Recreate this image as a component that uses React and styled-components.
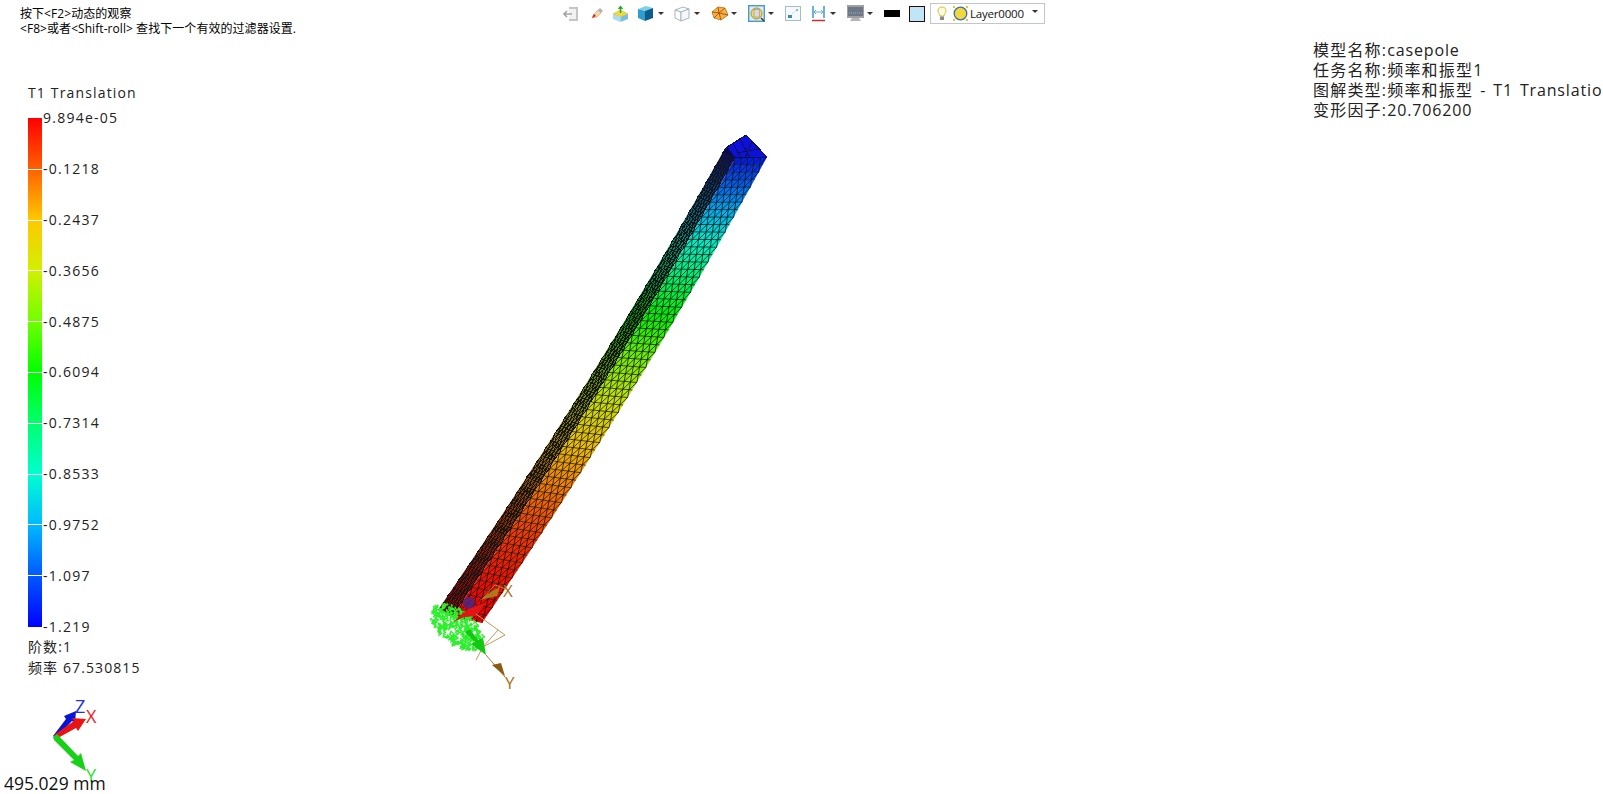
import React, { useMemo } from "react";
import styled, { createGlobalStyle } from "styled-components";

const Global = createGlobalStyle`
  html, body { margin: 0; padding: 0; background: #fff; }
  #root { width: 1603px; height: 794px; }
`;

const FONT = `"Open Sans", "Noto Sans CJK SC", sans-serif`;

const Page = styled.div`
  position: relative;
  width: 1603px;
  height: 794px;
  overflow: hidden;
  background: #fff;
  font-family: ${FONT};
  color: #111;
`;
const Canvas = styled.svg`
  position: absolute;
  left: 0;
  top: 0;
`;
const Overlay = styled.div`
  position: relative;
  display: flex;
  flex-direction: column;
  height: 100%;
`;
const Header = styled.header`
  display: grid;
  grid-template-columns: 563px auto 1fr;
  height: 40px;
`;
const Hint = styled.div`
  padding: 6px 0 0 20px;
  font-size: 12px;
  line-height: 15px;
  letter-spacing: 0.06px;
  white-space: pre;
  color: #000;
`;
const Toolbar = styled.div`
  display: flex;
  align-items: center;
  height: 21px;
  padding-top: 3px;
`;
const Glyph = styled.svg`
  display: block;
  flex: none;
  margin-left: ${(p) => p.$ml || 0}px;
`;
const Caret = styled.span`
  flex: none;
  width: 0;
  height: 0;
  margin-left: ${(p) => p.$ml || 3}px;
  border-left: 3px solid transparent;
  border-right: 3px solid transparent;
  border-top: 3px solid #333;
`;
const Combo = styled.div`
  display: flex;
  align-items: center;
  box-sizing: border-box;
  width: 115px;
  height: 21px;
  margin-left: 5px;
  padding-left: 6px;
  border: 1px solid #c2c6ca;
  font-size: 11.5px;
  letter-spacing: -0.2px;
  color: #111;
`;
const ComboText = styled.span`
  margin-left: 2px;
  flex: 1;
`;
const ComboCaret = styled(Caret)`
  margin: 0 6px 4px 0;
`;
const Body = styled.main`
  flex: 1;
  display: flex;
  justify-content: space-between;
`;
const LeftColumn = styled.section`
  display: flex;
  flex-direction: column;
`;
const Legend = styled.div`
  padding: 44px 0 0 28px;
`;
const LegendTitle = styled.div`
  font-size: 14px;
  line-height: 18px;
  letter-spacing: 1.15px;
  color: #222;
`;
const Scale = styled.div`
  display: flex;
  margin-top: 16px;
  height: 509px;
`;
const ColorBar = styled.div`
  width: 14px;
  height: 100%;
  display: flex;
  flex-direction: column;
  justify-content: space-between;
  background: linear-gradient(
    to bottom,
    #ff0000 0%,
    #ff6000 10%,
    #ffc800 20%,
    #d0f000 30%,
    #70ff00 40%,
    #00ff00 50%,
    #00ff70 60%,
    #00ffd0 70%,
    #00b8ff 80%,
    #0058ff 90%,
    #0000ff 100%
  );
`;
const Tick = styled.i`
  display: block;
  height: 1px;
  background: ${(p) => (p.$hidden ? "transparent" : "#fff")};
`;
const ScaleLabels = styled.div`
  display: flex;
  flex-direction: column;
  justify-content: space-between;
  height: 525px;
  margin: -8px 0 0 1px;
`;
const ScaleLabel = styled.span`
  font-size: 14px;
  line-height: 16px;
  letter-spacing: 1.25px;
  color: #222;
  white-space: nowrap;
`;
const Meta = styled.div`
  margin-top: 9px;
  font-size: 14px;
  line-height: 21px;
  letter-spacing: 1.1px;
  color: #222;
`;
const Triad = styled.svg`
  display: block;
  overflow: visible;
  margin-top: 14px;
`;
const Distance = styled.div`
  padding-left: 4px;
  font-size: 17.5px;
  line-height: 22px;
  color: #111;
  white-space: nowrap;
`;
const Info = styled.aside`
  box-sizing: border-box;
  width: 290px;
  overflow: hidden;
  font-size: 16px;
  line-height: 20px;
  letter-spacing: 1.2px;
  color: #222;
  white-space: nowrap;
`;
const Latin = styled.span`
  letter-spacing: 0.85px;
  word-spacing: 2px;
`;

/* ---------- colour map ---------- */
const STOPS = [
  [255, 0, 0], [255, 96, 0], [255, 200, 0], [208, 240, 0], [112, 255, 0], [0, 255, 0],
  [0, 255, 112], [0, 255, 208], [0, 184, 255], [0, 88, 255], [0, 0, 255],
];
function colorAt(f, k = 1) {
  const v = Math.max(0, Math.min(0.9999, f)) * 10;
  const i = Math.floor(v);
  const u = v - i;
  const c = STOPS[i].map((a, n) => Math.round((a + (STOPS[i + 1][n] - a) * u) * k));
  return `rgb(${c[0]},${c[1]},${c[2]})`;
}

/* ---------- beam mesh ---------- */
const bez = (a, c, b, t) => [
  (1 - t) * (1 - t) * a[0] + 2 * t * (1 - t) * c[0] + t * t * b[0],
  (1 - t) * (1 - t) * a[1] + 2 * t * (1 - t) * c[1] + t * t * b[1],
];
const LEFT = [[723, 152], [595, 381], [438, 610]];
const RIDGE = [[735, 158], [608, 387], [452, 617]];
const RIGHT = [[767, 157], [640, 390], [482, 623]];
const lerp = (p, q, u) => [p[0] + (q[0] - p[0]) * u, p[1] + (q[1] - p[1]) * u];
const fmt = (p) => `${p[0].toFixed(1)} ${p[1].toFixed(1)}`;

function buildFace(A, B, rows, cols, shade) {
  const strips = [];
  let lines = "";
  const P = (i, c) => lerp(bez(A[0], A[1], A[2], i / rows), bez(B[0], B[1], B[2], i / rows), c);
  for (let i = 0; i < rows; i++) {
    const y = P(i + 0.5, 0.5)[1];
    const s = Math.max(0, (620 - y) / 470);
    const f = Math.pow(s, 1.6);
    strips.push({
      pts: `${fmt(P(i, 0))} ${fmt(P(i, 1))} ${fmt(P(i + 1, 1))} ${fmt(P(i + 1, 0))}`,
      fill: colorAt(f, shade),
    });
    lines += `M${fmt(P(i, 0))}L${fmt(P(i, 1))}`;
    const odd = i % 2 === 1;
    for (let j = 0; j <= cols; j++) {
      const top = (j + (odd ? 0.5 : 0)) / cols;
      const l = (j + (odd ? 0 : -0.5)) / cols;
      const r = (j + (odd ? 1 : 0.5)) / cols;
      if (top <= 1) {
        if (l >= 0) lines += `M${fmt(P(i, top))}L${fmt(P(i + 1, l))}`;
        if (r <= 1) lines += `M${fmt(P(i, top))}L${fmt(P(i + 1, r))}`;
      }
    }
  }
  return { strips, lines };
}

function rng(seed) {
  let a = seed;
  return () => {
    a = (a + 0x6d2b79f5) | 0;
    let t = Math.imul(a ^ (a >>> 15), 1 | a);
    t = (t + Math.imul(t ^ (t >>> 7), 61 | t)) ^ t;
    return ((t ^ (t >>> 14)) >>> 0) / 4294967296;
  };
}

function Constraints() {
  const d = useMemo(() => {
    const r = rng(4242);
    let out = "";
    for (let n = 0; n < 340; n++) {
      const a = r() * Math.PI * 2;
      const m = Math.sqrt(r());
      const u = Math.cos(a) * m * 28;
      const v = Math.sin(a) * m * 23;
      const x = 456 + u * 0.92 + v * 0.2;
      const y = 626 + u * 0.3 + v * 0.95;
      const dx = 1 + r() * 2.5;
      const dy = 1 + r() * 2.5;
      out += `M${x.toFixed(1)} ${y.toFixed(1)}l${dx.toFixed(1)} ${dy.toFixed(1)}m-${dx.toFixed(1)} 1l${dy.toFixed(1)} -2`;
    }
    return out;
  }, []);
  return <path d={d} stroke="#2cf02c" strokeWidth="1.3" fill="none" />;
}

function Beam() {
  const { dark, bright } = useMemo(
    () => ({
      dark: buildFace(LEFT, RIDGE, 62, 5, 0.55),
      bright: buildFace(RIDGE, RIGHT, 62, 5, 0.94),
    }),
    []
  );
  return (
    <g>
      {dark.strips.map((s, i) => (
        <polygon key={`d${i}`} points={s.pts} fill={s.fill} />
      ))}
      {bright.strips.map((s, i) => (
        <polygon key={`b${i}`} points={s.pts} fill={s.fill} />
      ))}
      <path d={dark.lines} stroke="#161616" strokeWidth="1" fill="none" shapeRendering="crispEdges" />
      <path d={bright.lines} stroke="#161616" strokeWidth="0.8" fill="none" />
      <polygon points="746,135 767,157 735,158 727,147" fill="#0c12dc" />
      <polygon points="727,147 735,158 723,152" fill="#0a0a50" />
      <path
        d="M727 147L746 135L767 157L735 158L727 147L723 152M740 139L750 158M733 143L741 158M752 141L745 158M759 149L737 153"
        stroke="#10104a"
        strokeWidth="1"
        fill="none"
        shapeRendering="crispEdges"
      />
    </g>
  );
}

function ModelMarks() {
  return (
    <g>
      <Constraints />
      <circle cx="469" cy="603" r="6" fill="#402a90" opacity="0.75" />
      <path d="M483 598L495 585L506 589" stroke="#b08840" strokeWidth="1" fill="none" />
      <path d="M480 600L492 591L500 587L497 596Z" fill="#b07818" />
      <path d="M453 622L468 609L485 603L477 616L464 617Z" fill="#e21414" />
      <path d="M476 614L505 635L483 647L476 660" stroke="#c09a58" strokeWidth="1" fill="none" />
      <path d="M483 647L498 630" stroke="#c09a58" strokeWidth="1" fill="none" />
      <path d="M465 632L470 629L478 640L483 638L486 655L471 644L475 642Z" fill="#12c812" />
      <path d="M486 655L505 677" stroke="#a87830" strokeWidth="1" />
      <path d="M492 665L501 663L505 676Z" fill="#8a5a12" />
      <text x="503" y="597" fontSize="17" fill="#a87018" fontFamily="Open Sans, sans-serif">X</text>
      <text x="505" y="689" fontSize="17" fill="#a87018" fontFamily="Open Sans, sans-serif">Y</text>
    </g>
  );
}

function TriadIcon() {
  return (
    <Triad width="110" height="80" viewBox="0 692 110 80">
      <path d="M53 736L66 719L64 716L76 711L75 723L72 721L56 738Z" fill="#0a14d8" />
      <path d="M54 735L74 721L72 718L86 719L78 731L76 728L56 739Z" fill="#e81414" />
      <path d="M53 737L57 734L78 756L81 753L86 771L70 762L74 760L54 740Z" fill="#18d018" />
      <text x="75" y="713" fontSize="18" fill="#2030e8" fontFamily="Open Sans, sans-serif">Z</text>
      <text x="86" y="723" fontSize="18" fill="#f01818" fontFamily="Open Sans, sans-serif">X</text>
      <text x="86" y="782" fontSize="18" fill="#30e030" fontFamily="Open Sans, sans-serif">Y</text>
    </Triad>
  );
}

/* ---------- toolbar icons ---------- */
const ExitIcon = () => (
  <Glyph width="15" height="14" viewBox="0 0 15 14">
    <path d="M6 1H14V13H6" stroke="#c6c6c6" strokeWidth="2" fill="#f2f2f2" />
    <path d="M9 7H1M4 4L1 7L4 10" stroke="#a4a4a4" strokeWidth="1.6" fill="none" />
  </Glyph>
);
const EraserIcon = () => (
  <Glyph $ml={13} width="12" height="11" viewBox="0 0 12 11">
    <path d="M1 10L3 6L7 2L10 5L6 9Z" fill="#f4d8a8" stroke="#c8a070" strokeWidth="0.6" />
    <path d="M1 10L3 6L5 8Z" fill="#d81818" />
    <path d="M7 2L9 0L12 3L10 5Z" fill="#b0b0b8" />
  </Glyph>
);
const ImportBoxIcon = () => (
  <Glyph $ml={9} width="17" height="16" viewBox="0 0 17 16">
    <path d="M1 8L8.5 4L16 8L8.5 11Z" fill="#f2d838" stroke="#c8a820" strokeWidth="0.5" />
    <path d="M1 8L8.5 11V16L1 13Z" fill="#a8dcf0" />
    <path d="M16 8L8.5 11V16L16 13Z" fill="#78bede" />
    <path d="M8.5 7V1M6.5 3L8.5 0.5L10.5 3" stroke="#18a838" strokeWidth="1.3" fill="none" />
  </Glyph>
);
const SolidCubeIcon = () => (
  <Glyph $ml={8} width="17" height="17" viewBox="0 0 17 17">
    <path d="M1 4L9 1L16 3L8 6Z" fill="#7cd0ec" />
    <path d="M1 4L8 6V16L1 13Z" fill="#2e9ccc" />
    <path d="M16 3L8 6V16L16 13Z" fill="#0c5c8c" />
  </Glyph>
);
const WireCubeIcon = () => (
  <Glyph $ml={10} width="16" height="16" viewBox="0 0 16 16">
    <path d="M1 4L9 1L15 3L7 6Z" fill="#fff" stroke="#a6b6c2" />
    <path d="M1 4L7 6V15L1 12Z" fill="#fff" stroke="#a6b6c2" />
    <path d="M15 3L7 6V15L15 12Z" fill="#f4f8fa" stroke="#a6b6c2" />
  </Glyph>
);
const PolyIcon = () => (
  <Glyph $ml={11} width="17" height="15" viewBox="0 0 17 15">
    <path d="M1 6L7 1L14 2L17 9L10 14L3 12Z" fill="#f2b440" stroke="#b87018" strokeWidth="0.8" />
    <path d="M7 1L8 7L1 6M8 7L14 2M8 7L17 9M8 7L10 14M8 7L3 12" stroke="#a83818" strokeWidth="0.8" fill="none" />
  </Glyph>
);
const FitIcon = () => (
  <Glyph $ml={11} width="17" height="17" viewBox="0 0 17 17">
    <rect x="0.7" y="0.7" width="15.6" height="15.6" fill="#dcecf4" stroke="#4a9cc8" strokeWidth="1.4" />
    <circle cx="8.5" cy="8.5" r="5.5" fill="#f4d860" stroke="#a89030" />
    <rect x="6" y="4.5" width="5.5" height="7.5" fill="#d8d8d8" stroke="#909090" strokeWidth="0.6" />
    <path d="M13 13L16 16" stroke="#333" strokeWidth="1.3" />
  </Glyph>
);
const FrameIcon = () => (
  <Glyph $ml={11} width="16" height="15" viewBox="0 0 16 15">
    <rect x="0.5" y="0.5" width="15" height="14" fill="#f4fafc" stroke="#a4bccb" />
    <rect x="3" y="9" width="4" height="3" fill="#3c88b8" />
    <path d="M7 8L12 4" stroke="#b8d4e4" strokeDasharray="1 1" />
    <rect x="11" y="3" width="2" height="2" fill="#88bcd8" />
  </Glyph>
);
const DimensionIcon = () => (
  <Glyph $ml={11} width="13" height="16" viewBox="0 0 13 16">
    <path d="M1 0V12M12 0V12" stroke="#2e90c8" strokeWidth="1.4" />
    <path d="M2 6H11M4 4L2 6L4 8M9 4L11 6L9 8" stroke="#68b0d8" fill="none" />
    <path d="M0 14.5H13" stroke="#c83030" strokeWidth="1.5" />
  </Glyph>
);
const MonitorIcon = () => (
  <Glyph $ml={11} width="17" height="17" viewBox="0 0 17 17">
    <rect x="0" y="0" width="17" height="13" fill="#a0a0a0" />
    <rect x="1" y="2" width="15" height="9" fill="#6c7888" />
    <path d="M2 8h13" stroke="#9cb0c8" strokeDasharray="1 1" />
    <path d="M5 13h7l2 3H3z" fill="#b4b4b4" />
  </Glyph>
);
const ColorChip = styled.span`
  flex: none;
  display: block;
  box-sizing: border-box;
  margin-left: ${(p) => p.$ml}px;
  width: 16px;
  height: ${(p) => p.$h}px;
  background: ${(p) => p.$bg};
  border: 1px solid ${(p) => p.$line};
`;
const BulbIcon = () => (
  <Glyph width="10" height="15" viewBox="0 0 10 15">
    <path d="M5 1C2 1 1 3 1 5C1 7 3 8 3 10H7C7 8 9 7 9 5C9 3 8 1 5 1Z" fill="#fffbe0" stroke="#d8c030" />
    <rect x="3" y="10.5" width="4" height="3.5" fill="#8a8a8a" />
  </Glyph>
);
const SunIcon = () => (
  <Glyph $ml={6} width="15" height="15" viewBox="0 0 15 15">
    <circle cx="7.5" cy="7.5" r="6.3" fill="#f2d83c" stroke="#3c6ca8" strokeWidth="1.3" />
    <path d="M0 0h2v2H0zM13 0h2v2h-2zM0 13h2v2H0zM13 13h2v2h-2z" fill="#e8c828" />
  </Glyph>
);

const TICKS = ["9.894e-05", "-0.1218", "-0.2437", "-0.3656", "-0.4875", "-0.6094", "-0.7314", "-0.8533", "-0.9752", "-1.097", "-1.219"];

export default function App() {
  return (
    <Page>
      <Global />
      <Canvas width="1603" height="794" viewBox="0 0 1603 794">
        <Beam />
        <ModelMarks />
      </Canvas>
      <Overlay>
        <Header>
          <Hint>{"按下<F2>动态的观察\n<F8>或者<Shift-roll> 查找下一个有效的过滤器设置."}</Hint>
          <Toolbar>
            <ExitIcon />
            <EraserIcon />
            <ImportBoxIcon />
            <SolidCubeIcon />
            <Caret $ml={4} />
            <WireCubeIcon />
            <Caret $ml={4} />
            <PolyIcon />
            <Caret />
            <FitIcon />
            <Caret />
            <FrameIcon />
            <DimensionIcon />
            <Caret $ml={5} />
            <MonitorIcon />
            <Caret />
            <ColorChip $ml={11} $h={7} $bg="#000" $line="#000" />
            <ColorChip $ml={9} $h={16} $bg="#bfe6f7" $line="#2a0a0a" />
            <Combo>
              <BulbIcon />
              <SunIcon />
              <ComboText>Layer0000</ComboText>
              <ComboCaret />
            </Combo>
          </Toolbar>
          <span />
        </Header>
        <Body>
          <LeftColumn>
            <Legend>
              <LegendTitle>T1 Translation</LegendTitle>
              <Scale>
                <ColorBar>
                  {TICKS.map((t, i) => (
                    <Tick key={t} $hidden={i === 0 || i === TICKS.length - 1} />
                  ))}
                </ColorBar>
                <ScaleLabels>
                  {TICKS.map((t) => (
                    <ScaleLabel key={t}>{t}</ScaleLabel>
                  ))}
                </ScaleLabels>
              </Scale>
              <Meta>
                阶数:1
                <br />
                频率 67.530815
              </Meta>
            </Legend>
            <TriadIcon />
            <Distance>495.029 mm</Distance>
          </LeftColumn>
          <Info>
            模型名称:<Latin>casepole</Latin>
            <br />
            任务名称:频率和振型1
            <br />
            图解类型:频率和振型<Latin> - T1 Translation</Latin>
            <br />
            变形因子:<Latin>20.706200</Latin>
          </Info>
        </Body>
      </Overlay>
    </Page>
  );
}
